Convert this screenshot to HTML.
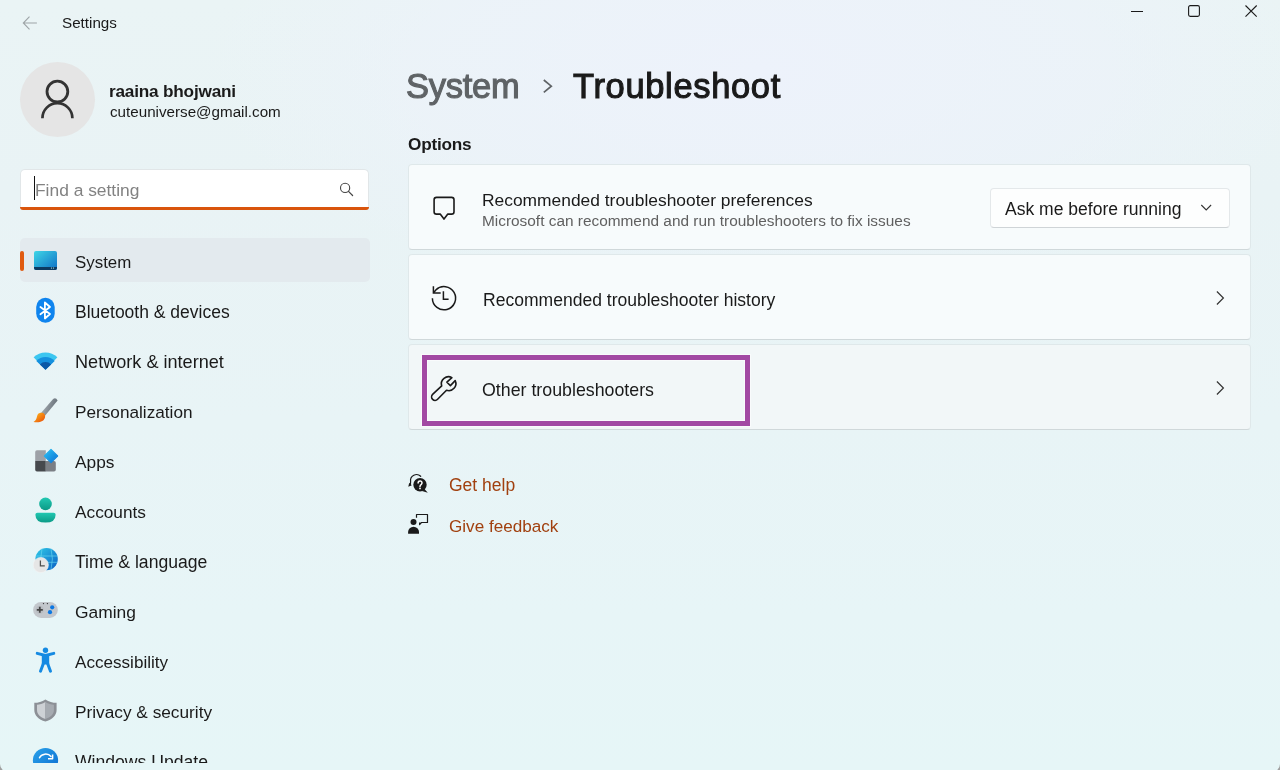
<!DOCTYPE html>
<html><head><meta charset="utf-8"><title>Settings</title>
<style>
html,body{margin:0;padding:0}
body{width:1280px;height:770px;overflow:hidden;position:relative;font-family:"Liberation Sans",sans-serif;color:#1a1a1a;
background:radial-gradient(ellipse 560px 230px at 760px 70px,rgba(237,242,251,1) 0%,rgba(237,242,251,0.6) 55%,rgba(237,242,251,0) 100%),linear-gradient(180deg,#eaf4f5 0%,#e9f3f5 25%,#e8f4f6 55%,#e7f5f7 80%,#e6f6f7 100%);}
.t{position:absolute;white-space:nowrap;line-height:1;will-change:transform}
.a{position:absolute}
svg{position:absolute;overflow:visible}
.card{position:absolute;left:408px;width:841px;height:84px;background:#f7fbfc;border:1px solid #dfe8ea;border-bottom-color:#d0d8da;border-radius:4px}
</style></head><body>

<!-- title bar -->
<svg style="left:0;top:0" width="1280" height="40">
  <path d="M29.5 16.6 L23.3 23 L29.5 29.3 M23.6 23 H36.9" fill="none" stroke="#9ea4a7" stroke-width="1.1"/>
  <path d="M1131 11.5 H1143" stroke="#1a1a1a" stroke-width="1"/>
  <rect x="1188.6" y="5.6" width="10.8" height="10.8" rx="1.6" fill="none" stroke="#1a1a1a" stroke-width="1.1"/>
  <path d="M1245.5 5.5 L1256.7 16.7 M1256.7 5.5 L1245.5 16.7" stroke="#1a1a1a" stroke-width="1.1"/>
</svg>

<!-- avatar -->
<div class="a" style="left:20px;top:62px;width:75px;height:75px;border-radius:50%;background:#e5e5e5"></div>
<svg style="left:0;top:0" width="100" height="140">
  <circle cx="57.4" cy="91.6" r="10.4" fill="none" stroke="#333" stroke-width="2.8"/>
  <path d="M42.4 118.2 A15 15 0 0 1 72.4 118.2" fill="none" stroke="#333" stroke-width="2.7"/>
</svg>

<!-- search -->
<div class="a" style="left:20px;top:169px;width:347px;height:38px;background:#fff;border:1px solid #e1e6e8;border-bottom:none;border-radius:5px 5px 0 0"></div>
<div class="a" style="left:20px;top:207px;width:349px;height:3px;background:#d9540c;border-radius:0 0 4px 4px"></div>
<div class="a" style="left:34px;top:176px;width:1.3px;height:24px;background:#111"></div>
<svg style="left:0;top:0" width="400" height="220">
  <circle cx="345.1" cy="187.9" r="4.6" fill="none" stroke="#444" stroke-width="1.1"/>
  <path d="M348.5 191.3 L352.6 195.5" stroke="#444" stroke-width="1.2" stroke-linecap="round"/>
</svg>

<!-- nav selected -->
<div class="a" style="left:20px;top:238px;width:350px;height:44px;background:#e3eaee;border-radius:5px"></div>
<div class="a" style="left:20px;top:251px;width:3.5px;height:20px;background:#e05a10;border-radius:2px"></div>

<!-- nav icons -->
<svg style="left:0;top:0" width="80" height="770">
  <defs>
    <linearGradient id="gSys" x1="0" y1="0" x2="1" y2="1"><stop offset="0" stop-color="#3fd6e6"/><stop offset="1" stop-color="#0f6fc6"/></linearGradient>
    <linearGradient id="gApp" x1="0" y1="0" x2="1" y2="1"><stop offset="0" stop-color="#2cc2f2"/><stop offset="1" stop-color="#0a70d6"/></linearGradient>
    <linearGradient id="gAcc" x1="0" y1="0" x2="0" y2="1"><stop offset="0" stop-color="#22c8b2"/><stop offset="1" stop-color="#0b9a86"/></linearGradient>
    <linearGradient id="gGlobe" x1="0" y1="0" x2="1" y2="1"><stop offset="0" stop-color="#30cbe8"/><stop offset="1" stop-color="#0a5ec4"/></linearGradient>
    <linearGradient id="gBrush" x1="0" y1="0" x2="1" y2="0.3"><stop offset="0" stop-color="#b2b8be"/><stop offset="1" stop-color="#667078"/></linearGradient>
    <linearGradient id="gOr" x1="0" y1="0" x2="1" y2="1"><stop offset="0" stop-color="#ffc01c"/><stop offset="1" stop-color="#e8480a"/></linearGradient>
    <linearGradient id="gShield" x1="0" y1="0" x2="1" y2="1"><stop offset="0" stop-color="#cfd3d8"/><stop offset="1" stop-color="#8b9096"/></linearGradient>
    <linearGradient id="gUpd" x1="0" y1="0" x2="1" y2="1"><stop offset="0" stop-color="#2aa2ea"/><stop offset="1" stop-color="#0a6cd0"/></linearGradient>
  </defs>
  <!-- system -->
  <rect x="34" y="251" width="23" height="19" rx="2" fill="url(#gSys)"/>
  <path d="M34 267 H57 V268 A2 2 0 0 1 55 270 H36 A2 2 0 0 1 34 268 Z" fill="#0c3a62"/>
  <circle cx="51.5" cy="268" r="0.6" fill="#cfe"/><circle cx="53.5" cy="268" r="0.6" fill="#cfe"/>
  <!-- bluetooth -->
  <rect x="36.2" y="297.7" width="18.5" height="25.1" rx="9.2" fill="#0f84ee"/>
  <path d="M40.4 307 L50 314 L44.9 318.5 V302.5 L50 307 L40.4 314.2" fill="none" stroke="#fff" stroke-width="1.8" stroke-linejoin="round" stroke-linecap="round"/>
  <!-- wifi -->
  <path d="M45.5 369.7 L33.6 357.2 A17.5 17.5 0 0 1 57.4 357.2 Z" fill="#3cc6f0"/>
  <path d="M45.5 369.7 L36.3 360.9 A12.7 12.7 0 0 1 54.7 360.9 Z" fill="#1590de"/>
  <path d="M45.5 369.7 L39.9 364.4 A7.7 7.7 0 0 1 51.1 364.4 Z" fill="#0b58a6"/>
  <!-- brush -->
  <path d="M41 412.9 L53.1 399 Q55.8 397.2 57.6 400.4 L45 415.8 Z" fill="url(#gBrush)"/>
  <path d="M40.5 412.8 C43.5 412 45.8 414.3 45 417.5 C44 421.5 39.5 423 33.5 422 C36 420.5 36.5 418.8 37 416.5 C37.5 414 38.5 413.2 40.5 412.8 Z" fill="url(#gOr)"/>
  <!-- apps -->
  <path d="M35.2 452 A1.8 1.8 0 0 1 37 450.2 H45.8 V461 H35.2 Z" fill="#9da1a7"/>
  <path d="M35.2 461 H45.8 V471.6 H37 A1.8 1.8 0 0 1 35.2 469.8 Z" fill="#46494d"/>
  <path d="M45.8 461 H54 A1.8 1.8 0 0 1 55.8 462.8 V469.8 A1.8 1.8 0 0 1 54 471.6 H45.8 Z" fill="#7b7f85"/>
  <path d="M51 449.5 L57.6 456 L51 462.6 L44.4 456 Z" fill="url(#gApp)" stroke="url(#gApp)" stroke-width="1.2" stroke-linejoin="round"/>
  <!-- accounts -->
  <circle cx="45.5" cy="503.9" r="6.3" fill="url(#gAcc)"/>
  <path d="M37.4 512.7 H53.6 Q55.6 512.7 55.6 514.7 Q55.6 522.6 45.5 522.6 Q35.4 522.6 35.4 514.7 Q35.4 512.7 37.4 512.7 Z" fill="url(#gAcc)"/>
  <!-- time & language -->
  <circle cx="46.6" cy="559.1" r="11.2" fill="url(#gGlobe)"/>
  <path d="M42 548.5 Q39.5 559 42 569.5 M51 548.5 Q53.8 559 51 569.5 M35.6 556 H57.6 M35.6 562.3 H57.6" fill="none" stroke="#6ad8f0" stroke-width="0.9" opacity="0.7"/>
  <circle cx="40.8" cy="565" r="7.6" fill="#e6e6e6" stroke="#f3f3f3" stroke-width="0.6"/>
  <path d="M40.4 560.4 V565.8 H44.8" fill="none" stroke="#505050" stroke-width="1.25"/>
  <!-- gaming -->
  <rect x="33.1" y="601.9" width="24.7" height="16" rx="8" fill="#c3c7cc"/>
  <circle cx="39.8" cy="609.8" r="4" fill="#b9bdc2"/>
  <path d="M36.8 609.8 H42.8 M39.8 606.8 V612.8" stroke="#464646" stroke-width="1.8"/>
  <circle cx="52.2" cy="607.3" r="2.1" fill="#0b78e3"/>
  <circle cx="50" cy="612.2" r="2.1" fill="#0b78e3"/>
  <circle cx="43.5" cy="603.6" r="0.7" fill="#333"/><circle cx="47.4" cy="603.6" r="0.7" fill="#333"/>
  <!-- accessibility -->
  <circle cx="45.5" cy="650.2" r="2.7" fill="#168ae2"/>
  <path d="M37.2 653.3 L45.5 655.5 L53.8 653.3" fill="none" stroke="#168ae2" stroke-width="2.9" stroke-linecap="round" stroke-linejoin="round"/>
  <path d="M41.8 654.5 H49.2 V664.5 H41.8 Z" fill="#168ae2"/><path d="M43.4 663.5 L40.5 671.2 M47.6 663.5 L50.5 671.2" fill="none" stroke="#168ae2" stroke-width="3" stroke-linecap="round"/>
  <!-- shield -->
  <path d="M45.4 699.4 C41.8 701.8 38.2 702.8 34.3 702.8 V710 C34.3 715.5 38.5 719.6 45.4 721.6 C52.3 719.6 56.6 715.5 56.6 710 V702.8 C52.6 702.8 49 701.8 45.4 699.4 Z" fill="#8c9096"/>
  <path d="M45.4 702 C42.6 703.8 39.6 704.6 37 704.8 V710 C37 714.3 40.3 717.4 45.4 719 Z" fill="#cdd1d5"/>
  <path d="M45.4 702 C48.2 703.8 51.2 704.6 53.9 704.8 V710 C53.9 714.3 50.5 717.4 45.4 719 Z" fill="#a6abb1"/>
  <!-- windows update -->
  <clipPath id="cpNav"><rect x="0" y="0" width="80" height="763"/></clipPath>
  <g clip-path="url(#cpNav)">
  <circle cx="45.5" cy="760.5" r="12.6" fill="url(#gUpd)"/>
  <path d="M39.5 757.8 A6.5 5.5 0 0 1 51 756.5" fill="none" stroke="#fff" stroke-width="1.5" stroke-linecap="round"/>
  <path d="M48 758.8 H52.6 V754.6" fill="none" stroke="#fff" stroke-width="1.5" stroke-linejoin="round"/>
  </g>
</svg>

<!-- header chevron -->
<svg style="left:0;top:0" width="600" height="120">
  <path d="M543.8 80 L551.3 86.2 L543.8 92.4" fill="none" stroke="#5f6366" stroke-width="1.7"/>
</svg>

<!-- cards -->
<div class="card" style="top:164px"></div>
<div class="card" style="top:254px"></div>
<div class="card" style="top:344px;background:#f2f7f8"></div>

<!-- dropdown -->
<div class="a" style="left:990px;top:188px;width:238px;height:38px;background:#fdfefe;border:1px solid #e4e8ea;border-bottom-color:#cfd4d7;border-radius:4px"></div>

<svg style="left:0;top:0" width="1280" height="560">
  <!-- bubble -->
  <path d="M436.5 197.4 H451.6 A2.4 2.4 0 0 1 454 199.8 V211.7 A2.4 2.4 0 0 1 451.6 214.1 H447.8 L444 219.1 L440.2 214.1 H436.5 A2.4 2.4 0 0 1 434.1 211.7 V199.8 A2.4 2.4 0 0 1 436.5 197.4 Z" fill="none" stroke="#1a1a1a" stroke-width="1.6" stroke-linejoin="round"/>
  <!-- dropdown chevron -->
  <path d="M1201.3 205 L1206.2 209.9 L1211.1 205" fill="none" stroke="#333" stroke-width="1.1"/>
  <!-- history -->
  <path d="M432.4 298.2 A11.6 11.6 0 1 0 435.8 290 L433.8 292.4" fill="none" stroke="#1a1a1a" stroke-width="1.5"/>
  <path d="M433.4 286.2 V292.9 H440.7" fill="none" stroke="#1a1a1a" stroke-width="1.5"/>
  <path d="M443.4 291.3 V299.2 H448.6" fill="none" stroke="#1a1a1a" stroke-width="1.5"/>
  <!-- chevrons -->
  <path d="M1216.9 291.5 L1223.4 298 L1216.9 304.5" fill="none" stroke="#333" stroke-width="1.2"/>
  <path d="M1216.9 381.5 L1223.4 388 L1216.9 394.5" fill="none" stroke="#333" stroke-width="1.2"/>
  <!-- wrench -->
  <path d="M441.7 385.9 A7.1 7.1 0 0 1 451.9 377.6 L446.9 382.2 L450.4 385.6 L455.2 380.6 A7.1 7.1 0 0 1 446.5 390.3 L437.6 399.3 A3.5 3.5 0 0 1 432.6 394.4 Z" fill="none" stroke="#1a1a1a" stroke-width="1.6" stroke-linejoin="round"/>
  <!-- get help -->
  <circle cx="420" cy="484.8" r="6.7" fill="#1a1a1a"/>
  <path d="M424.5 489 L427.8 492.8 L422 491" fill="#1a1a1a"/>
  <path d="M420.7 476.3 A6 6 0 0 0 410.6 481.5 Q410.8 483 410 485" fill="none" stroke="#1a1a1a" stroke-width="1.2" stroke-linecap="round"/>
  <path d="M408.3 486.8 L409.2 482.8 L411.8 485.2 Z" fill="#1a1a1a"/>
  <path d="M418.1 482.9 A1.95 1.95 0 1 1 421.3 484.4 Q420 485.2 420 486.5" fill="none" stroke="#fff" stroke-width="1.5" stroke-linecap="round"/><circle cx="420" cy="488.4" r="0.9" fill="#fff"/>
  <!-- feedback -->
  <circle cx="413.5" cy="521.9" r="3" fill="#1a1a1a"/>
  <path d="M408.1 533.8 V532 A5.45 5.2 0 0 1 419 532 V533.8 Z" fill="#1a1a1a"/>
  <path d="M416.5 517.8 V514.5 H427.5 V522.5 H421.5 L419.6 524.5 V522.5" fill="none" stroke="#1a1a1a" stroke-width="1.2" stroke-linejoin="round"/>
</svg>

<!-- purple highlight -->
<div class="a" style="left:422px;top:355px;width:318px;height:61px;border:5px solid #a249a3;box-shadow:0 0 0 1px rgba(255,255,255,0.55),inset 0 0 0 1px rgba(255,255,255,0.55)"></div>

<div id="t_settings" class="t" style="left:62.30px;top:15.21px;font-size:15.2px;font-weight:400;color:#1a1a1a;">Settings</div>
<div id="t_name" class="t" style="left:109.40px;top:83.21px;font-size:17.2px;font-weight:700;color:#1a1a1a;letter-spacing:-0.2px;">raaina bhojwani</div>
<div id="t_email" class="t" style="left:110.00px;top:104.21px;font-size:15.2px;font-weight:400;color:#1a1a1a;">cuteuniverse@gmail.com</div>
<div id="t_find" class="t" style="left:34.80px;top:181.81px;font-size:17.4px;font-weight:400;color:#828282;">Find a setting</div>
<div id="t_nav0" class="t" style="left:74.70px;top:255.01px;font-size:16.9px;font-weight:400;color:#1a1a1a;">System</div>
<div id="t_nav1" class="t" style="left:75.40px;top:304.01px;font-size:17.5px;font-weight:400;color:#1a1a1a;">Bluetooth &amp; devices</div>
<div id="t_nav2" class="t" style="left:75.40px;top:353.00px;font-size:18.1px;font-weight:400;color:#1a1a1a;">Network &amp; internet</div>
<div id="t_nav3" class="t" style="left:74.90px;top:404.00px;font-size:17.2px;font-weight:400;color:#1a1a1a;">Personalization</div>
<div id="t_nav4" class="t" style="left:75.15px;top:454.00px;font-size:17.3px;font-weight:400;color:#1a1a1a;">Apps</div>
<div id="t_nav5" class="t" style="left:75.30px;top:504.01px;font-size:17.25px;font-weight:400;color:#1a1a1a;">Accounts</div>
<div id="t_nav6" class="t" style="left:75.30px;top:554.01px;font-size:17.6px;font-weight:400;color:#1a1a1a;">Time &amp; language</div>
<div id="t_nav7" class="t" style="left:74.70px;top:604.01px;font-size:17.4px;font-weight:400;color:#1a1a1a;">Gaming</div>
<div id="t_nav8" class="t" style="left:75.10px;top:654.00px;font-size:17.1px;font-weight:400;color:#1a1a1a;">Accessibility</div>
<div id="t_nav9" class="t" style="left:74.90px;top:704.01px;font-size:17.25px;font-weight:400;color:#1a1a1a;">Privacy &amp; security</div>
<div id="t_nav10" class="t" style="left:75.20px;top:754.01px;font-size:17.6px;font-weight:400;color:#1a1a1a;clip-path:inset(-10px -10px 8.61px -10px);">Windows Update</div>
<div id="t_hsys" class="t" style="left:406.00px;top:69.02px;font-size:34.5px;font-weight:400;color:#5f6366;letter-spacing:-0.25px;-webkit-text-stroke:1.1px #5f6366;">System</div>
<div id="t_htrb" class="t" style="left:573.40px;top:69.02px;font-size:34.5px;font-weight:400;color:#1a1a1a;letter-spacing:0.65px;-webkit-text-stroke:1.1px #1a1a1a;">Troubleshoot</div>
<div id="t_opts" class="t" style="left:408.40px;top:136.00px;font-size:17.2px;font-weight:700;color:#1a1a1a;letter-spacing:-0.23px;">Options</div>
<div id="t_rp" class="t" style="left:481.75px;top:191.60px;font-size:17.4px;font-weight:400;color:#1a1a1a;">Recommended troubleshooter preferences</div>
<div id="t_ms" class="t" style="left:481.60px;top:212.90px;font-size:15.4px;font-weight:400;color:#606060;">Microsoft can recommend and run troubleshooters to fix issues</div>
<div id="t_ask" class="t" style="left:1004.90px;top:200.90px;font-size:17.55px;font-weight:400;color:#1a1a1a;">Ask me before running</div>
<div id="t_rh" class="t" style="left:482.60px;top:291.60px;font-size:17.55px;font-weight:400;color:#1a1a1a;">Recommended troubleshooter history</div>
<div id="t_ot" class="t" style="left:482.20px;top:381.61px;font-size:17.8px;font-weight:400;color:#1a1a1a;">Other troubleshooters</div>
<div id="t_gh" class="t" style="left:448.70px;top:476.71px;font-size:17.5px;font-weight:400;color:#a1400f;">Get help</div>
<div id="t_gf" class="t" style="left:448.70px;top:517.71px;font-size:17.1px;font-weight:400;color:#a1400f;">Give feedback</div>

<svg style="left:0;top:0" width="1280" height="770"><path d="M0 764 A8 8 0 0 0 2.7 770 L0 770 Z" fill="#a0a0a0"/><path d="M1280 764 A8 8 0 0 1 1277.3 770 L1280 770 Z" fill="#a0a0a0"/></svg>
</body></html>
